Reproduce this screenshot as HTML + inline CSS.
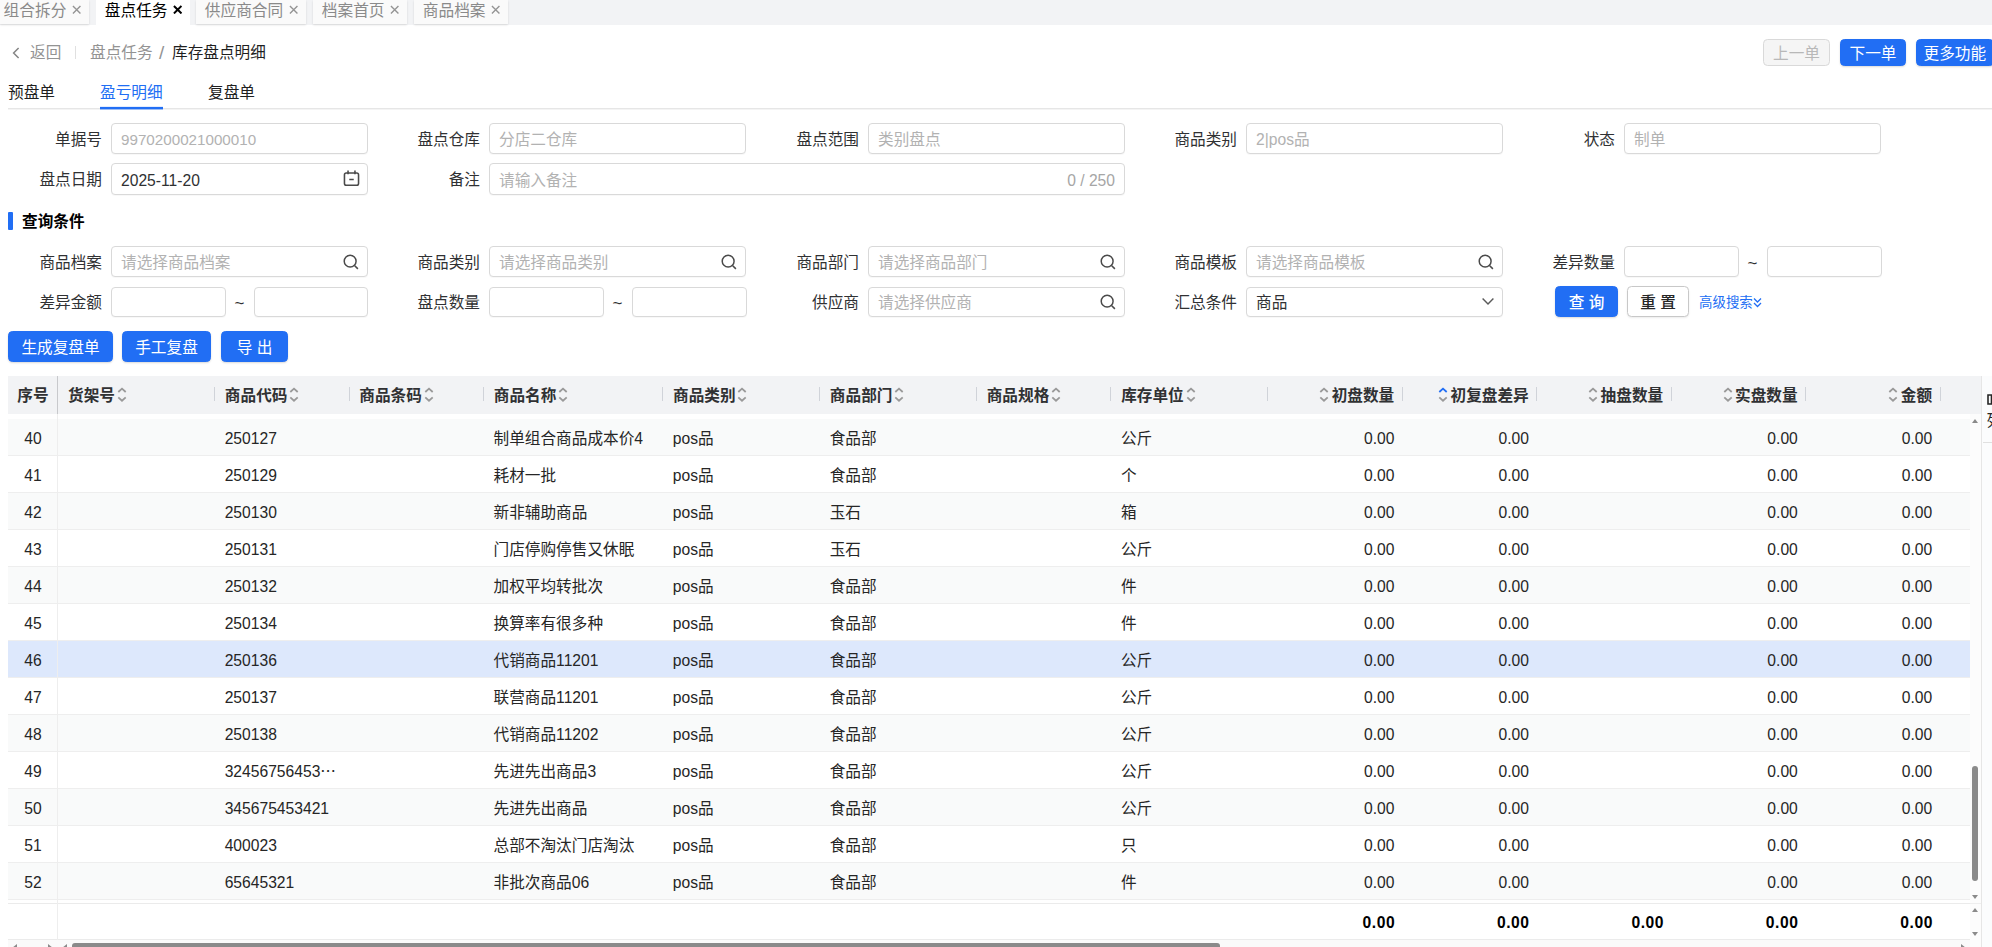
<!DOCTYPE html>
<html lang="zh-CN">
<head>
<meta charset="utf-8">
<title>库存盘点明细</title>
<style>
*{box-sizing:border-box;margin:0;padding:0}
html,body{width:1992px;height:947px;overflow:hidden;background:#fff}
body{font-family:"Liberation Sans","Noto Sans CJK SC",sans-serif;font-size:15.65px;color:#303133;position:relative;line-height:1}
.abs{position:absolute}
#tabbar{position:absolute;left:0;top:0;width:1992px;height:25px;background:#f2f3f5}
.tab{position:absolute;top:0;height:24px;background:#fafafa;color:#8a8a8a;font-size:15.7px;line-height:21.6px;white-space:nowrap;padding-left:4px;box-shadow:0 1px 2px rgba(0,0,0,.12)}
.tab.on{background:#fff;color:#000;height:25px;box-shadow:none}
.tab svg{position:absolute;right:7.3px;top:4.8px;width:9.4px;height:9.4px;fill:none;stroke:#949494;stroke-width:1.45}
.tab.on svg{stroke:#000;stroke-width:2.1;right:8px}
#crumb{position:absolute;left:0;top:40px;height:24px;line-height:26.8px;white-space:nowrap;font-size:15.65px}
#crumb span{position:absolute;top:0}
.g{color:#939393}
.btn{position:absolute;height:31px;line-height:32.2px;border-radius:4.5px;background:#216ef4;color:#fff;text-align:center;font-size:15.65px;white-space:nowrap;border:1px solid #216ef4;box-shadow:0 1px 2px rgba(0,0,0,.15)}
.btn.sm{height:27px;line-height:27.4px}
.btn.dis{background:#f5f5f5;border-color:#d9d9d9;color:#b8b8b8;box-shadow:none}
.btn.pl{background:#fff;border-color:#c8c8c8;color:#262626;box-shadow:0 1px 2px rgba(0,0,0,.08)}
.stab{position:absolute;top:80px;height:26px;line-height:26px;font-size:15.7px;color:#1f1f1f;white-space:nowrap}
.stab.on{color:#216ef4}
#sline{position:absolute;left:8px;top:108px;width:1984px;height:1px;background:#e6e6e6;box-shadow:0 1px 0 #f4f4f4}
#sink{position:absolute;left:100px;top:107px;width:63px;height:2px;background:#216ef4;box-shadow:0 1px 0 rgba(33,110,244,.4),0 -1px 0 rgba(33,110,244,.12)}
.lb{position:absolute;height:31px;line-height:33.4px;text-align:right;width:100px;color:#303133;white-space:nowrap}
.in{position:absolute;height:31px;width:257px;border:1px solid #d9d9d9;border-radius:4px;background:#fff;line-height:31.8px;padding-left:9px;color:#b2b2b2;white-space:nowrap;box-shadow:0 1px 1px rgba(0,0,0,.03)}
.in.v{color:#303133}
.in svg{position:absolute;right:7px;top:5.5px;width:18px;height:18px;fill:none;stroke:#4a4a4a;stroke-width:1.4}
.in .cnt{position:absolute;right:9px;top:0;color:#a6a6a6}
.til{position:absolute;top:286px;height:31px;line-height:36.4px;color:#303133;font-size:17px;margin-left:-.5px}
#qt{position:absolute;left:8px;top:212px;height:18px;line-height:19.6px;font-weight:bold;color:#000;padding-left:14px;font-size:15.65px}
#qt:before{content:"";position:absolute;left:0;top:0;width:4.5px;height:18px;border-radius:1px;background:#216ef4}
#thead{position:absolute;left:8px;top:376px;width:1973px;height:38px;background:#f2f3f5}
.th{position:absolute;top:376px;height:38px;line-height:39.2px;font-weight:bold;color:#303133;white-space:nowrap;font-size:15.65px}
.th.c0{text-align:center}
.th.r{text-align:right}
.srt{display:inline-block;width:10px;height:15.3px;vertical-align:-1.1px;fill:none;stroke:#999;stroke-width:1.8;margin:0 0 0 1.8px}
.th.r .srt{margin:0 2.4px 0 0}
.srt .on{stroke:#216ef4}
.sep{position:absolute;top:387px;width:1px;height:14px;background:#d0d3d9}
#tbody{position:absolute;left:8px;top:414px;width:1962px;height:489px;overflow:hidden}
.tr{position:absolute;left:0;width:1962px;height:37.08px;border-bottom:1px solid #eee;background:#fff;margin-top:-414px}
.tr.odd{background:#f9fafa}
.tr.sel{background:#dde8fc}
.td{position:absolute;top:0;height:37px;line-height:39px;white-space:nowrap;color:#262626}
.td.c{text-align:center}
.td.r{text-align:right}
#tfoot{position:absolute;left:8px;top:903px;width:1962px;height:37px;border-top:1px solid #ebebeb;border-bottom:1px solid #ebebeb;background:#fff;font-weight:bold;letter-spacing:.55px}
#tfoot .td{color:#000;line-height:37px}
#c0line{position:absolute;left:57px;top:376px;width:1px;height:571px;background:#eee}
#c0lineh{position:absolute;left:56.6px;top:376px;width:1px;height:38px;background:#c8c9cc}
#vsb{position:absolute;left:1970px;top:414px;width:11px;height:533px;background:#fcfcfc}
#vthumb{position:absolute;left:1972.3px;top:766.4px;width:6px;height:114.6px;border-radius:3px;background:#8a8a8a}
#side{position:absolute;left:1981px;top:376px;width:11px;height:571px;background:#fbfcfd;border-left:1px solid #e6e6e6;overflow:hidden}
#hsb{position:absolute;left:8px;top:940px;width:1962px;height:7px;background:#fafafa}
#hthumb{position:absolute;left:71.8px;top:942.7px;width:1148px;height:6px;border-radius:3px;background:#8a8a8a}
.ar{position:absolute;width:0;height:0;border:3px solid transparent}
.n{font-size:15.2px}
.in.r2{line-height:29.8px}
.in.r2 svg{top:4.5px}

</style>
</head>
<body>
<div id="tabbar">
<div class="tab" style="left:0px;width:89px;padding-left:3.6px">组合拆分<svg viewBox="0 0 10 10"><path d="M1 1l8 8M9 1l-8 8"/></svg></div>
<div class="tab on" style="left:96px;width:94px;padding-left:8.8px">盘点任务<svg viewBox="0 0 10 10"><path d="M1 1l8 8M9 1l-8 8"/></svg></div>
<div class="tab" style="left:196px;width:110px;padding-left:8.8px">供应商合同<svg viewBox="0 0 10 10"><path d="M1 1l8 8M9 1l-8 8"/></svg></div>
<div class="tab" style="left:313px;width:94px;padding-left:8.8px">档案首页<svg viewBox="0 0 10 10"><path d="M1 1l8 8M9 1l-8 8"/></svg></div>
<div class="tab" style="left:414px;width:94px;padding-left:8.8px">商品档案<svg viewBox="0 0 10 10"><path d="M1 1l8 8M9 1l-8 8"/></svg></div>
</div>
<div id="crumb">
<svg class="abs" style="left:12px;top:6.5px;width:8px;height:12px" viewBox="0 0 8 12"><path d="M6.6 1 1.6 6l5 5" fill="none" stroke="#858585" stroke-width="1.5"/></svg>
<span class="g" style="left:30px">返回</span>
<i class="abs" style="left:75px;top:6px;width:1px;height:13px;background:#e0e0e0"></i>
<span class="g" style="left:90px">盘点任务</span>
<span class="g" style="left:159px;font-size:19px">/</span>
<span style="left:172px;color:#1f1f1f">库存盘点明细</span>
</div>
<div class="btn sm dis" style="left:1763px;top:39px;width:67px">上一单</div>
<div class="btn sm" style="left:1840px;top:39px;width:66px">下一单</div>
<div class="btn sm" style="left:1916px;top:39px;width:77.6px">更多功能</div>

<div class="stab" style="left:8px">预盘单</div>
<div class="stab on" style="left:100px">盈亏明细</div>
<div class="stab" style="left:208px">复盘单</div>
<div id="sline"></div><div id="sink"></div>

<div class="lb" style="left:2px;top:123px">单据号</div><div class="in" style="left:111px;top:123px"><span class="n">9970200021000010</span></div>
<div class="lb" style="left:380px;top:123px">盘点仓库</div><div class="in" style="left:489px;top:123px">分店二仓库</div>
<div class="lb" style="left:759px;top:123px">盘点范围</div><div class="in" style="left:868px;top:123px">类别盘点</div>
<div class="lb" style="left:1137px;top:123px">商品类别</div><div class="in" style="left:1246px;top:123px">2|pos品</div>
<div class="lb" style="left:1515px;top:123px">状态</div><div class="in" style="left:1624px;top:123px">制单</div>

<div class="lb" style="left:2px;top:163px">盘点日期</div><div class="in v" style="left:111px;top:163px;height:32px;line-height:33.2px">2025-11-20<svg style="width:19px;height:19px;right:6.5px;top:5px" viewBox="0 0 17 17"><rect x="2.2" y="3.6" width="12.6" height="11" rx="1.6"/><path d="M5.4 1.4v3.2M11.6 1.4v3.2M6.5 9.4h4"/></svg></div>
<div class="lb" style="left:380px;top:163px">备注</div><div class="in" style="left:489px;top:163px;width:636px;height:32px;line-height:33.2px">请输入备注<span class="cnt">0 / 250</span></div>

<div id="qt">查询条件</div>

<div class="lb" style="left:2px;top:246px">商品档案</div><div class="in" style="left:111px;top:246px">请选择商品档案<svg viewBox="0 0 17 17"><circle cx="7.7" cy="7.7" r="5.6"/><path d="M11.8 11.8l3.2 3.2"/></svg></div>
<div class="lb" style="left:380px;top:246px">商品类别</div><div class="in" style="left:489px;top:246px">请选择商品类别<svg viewBox="0 0 17 17"><circle cx="7.7" cy="7.7" r="5.6"/><path d="M11.8 11.8l3.2 3.2"/></svg></div>
<div class="lb" style="left:759px;top:246px">商品部门</div><div class="in" style="left:868px;top:246px">请选择商品部门<svg viewBox="0 0 17 17"><circle cx="7.7" cy="7.7" r="5.6"/><path d="M11.8 11.8l3.2 3.2"/></svg></div>
<div class="lb" style="left:1137px;top:246px">商品模板</div><div class="in" style="left:1246px;top:246px">请选择商品模板<svg viewBox="0 0 17 17"><circle cx="7.7" cy="7.7" r="5.6"/><path d="M11.8 11.8l3.2 3.2"/></svg></div>
<div class="lb" style="left:1515px;top:246px">差异数量</div><div class="in" style="left:1624px;top:246px;width:115px"></div><span class="til" style="left:1748px;top:246px;line-height:36.4px">~</span><div class="in" style="left:1767px;top:246px;width:115px"></div>

<div class="lb" style="left:2px;top:286px">差异金额</div><div class="in" style="left:111px;top:287px;height:30px;width:115px"></div><span class="til" style="left:235px">~</span><div class="in" style="left:254px;top:287px;height:30px;width:114px"></div>
<div class="lb" style="left:380px;top:286px">盘点数量</div><div class="in" style="left:489px;top:287px;height:30px;width:115px"></div><span class="til" style="left:613px">~</span><div class="in" style="left:632px;top:287px;height:30px;width:115px"></div>
<div class="lb" style="left:759px;top:286px">供应商</div><div class="in r2" style="left:868px;top:287px;height:30px">请选择供应商<svg viewBox="0 0 17 17"><circle cx="7.7" cy="7.7" r="5.6"/><path d="M11.8 11.8l3.2 3.2"/></svg></div>
<div class="lb" style="left:1137px;top:286px">汇总条件</div><div class="in v r2" style="left:1246px;top:287px;height:30px">商品<svg viewBox="0 0 17 17" style="right:4.6px;top:4px;stroke:#5a5a5a"><path d="M3.4 6.2l5.1 5.1 5.1-5.1"/></svg></div>
<div class="btn" style="left:1555px;top:286px;width:63px;font-weight:500">查 询</div>
<div class="btn pl" style="left:1627px;top:286px;width:62px;font-weight:500">重 置</div>
<div class="abs" style="left:1699px;top:294px;font-size:13.45px;line-height:17.2px;color:#216ef4;white-space:nowrap">高级搜索<svg style="width:9px;height:11px;vertical-align:-1px;fill:none;stroke:#216ef4;stroke-width:1.3" viewBox="0 0 9 11"><path d="M1 1.5l3.5 3.5L8 1.5M1 6l3.5 3.5L8 6"/></svg></div>

<div class="btn" style="left:8px;top:331px;width:105px">生成复盘单</div>
<div class="btn" style="left:122px;top:331px;width:89px">手工复盘</div>
<div class="btn" style="left:221px;top:331px;width:67px">导 出</div>

<div id="thead"></div>
<div class="th c0" style="left:8px;width:50px">序号</div><div class="th" style="left:68.00px">货架号<svg class="srt" viewBox="0 0 10 15.3"><path d="M1.3 5 5 1.6 8.7 5M1.3 10.3 5 13.7 8.7 10.3"/></svg></div><div class="th" style="left:224.86px">商品代码<svg class="srt" viewBox="0 0 10 15.3"><path d="M1.3 5 5 1.6 8.7 5M1.3 10.3 5 13.7 8.7 10.3"/></svg></div><div class="th" style="left:359.30px">商品条码<svg class="srt" viewBox="0 0 10 15.3"><path d="M1.3 5 5 1.6 8.7 5M1.3 10.3 5 13.7 8.7 10.3"/></svg></div><div class="th" style="left:493.75px">商品名称<svg class="srt" viewBox="0 0 10 15.3"><path d="M1.3 5 5 1.6 8.7 5M1.3 10.3 5 13.7 8.7 10.3"/></svg></div><div class="th" style="left:673.02px">商品类别<svg class="srt" viewBox="0 0 10 15.3"><path d="M1.3 5 5 1.6 8.7 5M1.3 10.3 5 13.7 8.7 10.3"/></svg></div><div class="th" style="left:829.87px">商品部门<svg class="srt" viewBox="0 0 10 15.3"><path d="M1.3 5 5 1.6 8.7 5M1.3 10.3 5 13.7 8.7 10.3"/></svg></div><div class="th" style="left:986.73px">商品规格<svg class="srt" viewBox="0 0 10 15.3"><path d="M1.3 5 5 1.6 8.7 5M1.3 10.3 5 13.7 8.7 10.3"/></svg></div><div class="th" style="left:1121.18px">库存单位<svg class="srt" viewBox="0 0 10 15.3"><path d="M1.3 5 5 1.6 8.7 5M1.3 10.3 5 13.7 8.7 10.3"/></svg></div><div class="th r" style="left:1267.53px;width:126.75px"><svg class="srt" viewBox="0 0 10 15.3"><path d="M1.3 5 5 1.6 8.7 5M1.3 10.3 5 13.7 8.7 10.3"/></svg>初盘数量</div><div class="th r" style="left:1401.98px;width:126.75px"><svg class="srt" viewBox="0 0 10 15.3"><path d="M1.3 10.3 5 13.7 8.7 10.3"/><path class="on" d="M1.3 5 5 1.6 8.7 5"/></svg>初复盘差异</div><div class="th r" style="left:1536.43px;width:126.75px"><svg class="srt" viewBox="0 0 10 15.3"><path d="M1.3 5 5 1.6 8.7 5M1.3 10.3 5 13.7 8.7 10.3"/></svg>抽盘数量</div><div class="th r" style="left:1670.88px;width:126.75px"><svg class="srt" viewBox="0 0 10 15.3"><path d="M1.3 5 5 1.6 8.7 5M1.3 10.3 5 13.7 8.7 10.3"/></svg>实盘数量</div><div class="th r" style="left:1805.32px;width:126.75px"><svg class="srt" viewBox="0 0 10 15.3"><path d="M1.3 5 5 1.6 8.7 5M1.3 10.3 5 13.7 8.7 10.3"/></svg>金额</div><i class="sep" style="left:214.16px"></i><i class="sep" style="left:348.60px"></i><i class="sep" style="left:483.05px"></i><i class="sep" style="left:662.32px"></i><i class="sep" style="left:819.17px"></i><i class="sep" style="left:976.03px"></i><i class="sep" style="left:1110.48px"></i><i class="sep" style="left:1267.33px"></i><i class="sep" style="left:1401.78px"></i><i class="sep" style="left:1536.23px"></i><i class="sep" style="left:1670.68px"></i><i class="sep" style="left:1805.12px"></i><i class="sep" style="left:1939.57px"></i>
<div id="tbody">
<div class="tr odd" style="top:418.52px"><span class="td c" style="left:0;width:50px">40</span><span class="td" style="left:216.66px">250127</span><span class="td" style="left:485.55px">制单组合商品成本价4</span><span class="td" style="left:664.82px">pos品</span><span class="td" style="left:821.67px">食品部</span><span class="td" style="left:1112.98px">公斤</span><span class="td r" style="left:1259.53px;width:126.95px">0.00</span><span class="td r" style="left:1393.98px;width:126.95px">0.00</span><span class="td r" style="left:1662.88px;width:126.95px">0.00</span><span class="td r" style="left:1797.32px;width:126.95px">0.00</span></div>
<div class="tr" style="top:455.57px"><span class="td c" style="left:0;width:50px">41</span><span class="td" style="left:216.66px">250129</span><span class="td" style="left:485.55px">耗材一批</span><span class="td" style="left:664.82px">pos品</span><span class="td" style="left:821.67px">食品部</span><span class="td" style="left:1112.98px">个</span><span class="td r" style="left:1259.53px;width:126.95px">0.00</span><span class="td r" style="left:1393.98px;width:126.95px">0.00</span><span class="td r" style="left:1662.88px;width:126.95px">0.00</span><span class="td r" style="left:1797.32px;width:126.95px">0.00</span></div>
<div class="tr odd" style="top:492.62px"><span class="td c" style="left:0;width:50px">42</span><span class="td" style="left:216.66px">250130</span><span class="td" style="left:485.55px">新非辅助商品</span><span class="td" style="left:664.82px">pos品</span><span class="td" style="left:821.67px">玉石</span><span class="td" style="left:1112.98px">箱</span><span class="td r" style="left:1259.53px;width:126.95px">0.00</span><span class="td r" style="left:1393.98px;width:126.95px">0.00</span><span class="td r" style="left:1662.88px;width:126.95px">0.00</span><span class="td r" style="left:1797.32px;width:126.95px">0.00</span></div>
<div class="tr" style="top:529.67px"><span class="td c" style="left:0;width:50px">43</span><span class="td" style="left:216.66px">250131</span><span class="td" style="left:485.55px">门店停购停售又休眠</span><span class="td" style="left:664.82px">pos品</span><span class="td" style="left:821.67px">玉石</span><span class="td" style="left:1112.98px">公斤</span><span class="td r" style="left:1259.53px;width:126.95px">0.00</span><span class="td r" style="left:1393.98px;width:126.95px">0.00</span><span class="td r" style="left:1662.88px;width:126.95px">0.00</span><span class="td r" style="left:1797.32px;width:126.95px">0.00</span></div>
<div class="tr odd" style="top:566.72px"><span class="td c" style="left:0;width:50px">44</span><span class="td" style="left:216.66px">250132</span><span class="td" style="left:485.55px">加权平均转批次</span><span class="td" style="left:664.82px">pos品</span><span class="td" style="left:821.67px">食品部</span><span class="td" style="left:1112.98px">件</span><span class="td r" style="left:1259.53px;width:126.95px">0.00</span><span class="td r" style="left:1393.98px;width:126.95px">0.00</span><span class="td r" style="left:1662.88px;width:126.95px">0.00</span><span class="td r" style="left:1797.32px;width:126.95px">0.00</span></div>
<div class="tr" style="top:603.77px"><span class="td c" style="left:0;width:50px">45</span><span class="td" style="left:216.66px">250134</span><span class="td" style="left:485.55px">换算率有很多种</span><span class="td" style="left:664.82px">pos品</span><span class="td" style="left:821.67px">食品部</span><span class="td" style="left:1112.98px">件</span><span class="td r" style="left:1259.53px;width:126.95px">0.00</span><span class="td r" style="left:1393.98px;width:126.95px">0.00</span><span class="td r" style="left:1662.88px;width:126.95px">0.00</span><span class="td r" style="left:1797.32px;width:126.95px">0.00</span></div>
<div class="tr odd sel" style="top:640.82px"><span class="td c" style="left:0;width:50px">46</span><span class="td" style="left:216.66px">250136</span><span class="td" style="left:485.55px">代销商品11201</span><span class="td" style="left:664.82px">pos品</span><span class="td" style="left:821.67px">食品部</span><span class="td" style="left:1112.98px">公斤</span><span class="td r" style="left:1259.53px;width:126.95px">0.00</span><span class="td r" style="left:1393.98px;width:126.95px">0.00</span><span class="td r" style="left:1662.88px;width:126.95px">0.00</span><span class="td r" style="left:1797.32px;width:126.95px">0.00</span></div>
<div class="tr" style="top:677.87px"><span class="td c" style="left:0;width:50px">47</span><span class="td" style="left:216.66px">250137</span><span class="td" style="left:485.55px">联营商品11201</span><span class="td" style="left:664.82px">pos品</span><span class="td" style="left:821.67px">食品部</span><span class="td" style="left:1112.98px">公斤</span><span class="td r" style="left:1259.53px;width:126.95px">0.00</span><span class="td r" style="left:1393.98px;width:126.95px">0.00</span><span class="td r" style="left:1662.88px;width:126.95px">0.00</span><span class="td r" style="left:1797.32px;width:126.95px">0.00</span></div>
<div class="tr odd" style="top:714.92px"><span class="td c" style="left:0;width:50px">48</span><span class="td" style="left:216.66px">250138</span><span class="td" style="left:485.55px">代销商品11202</span><span class="td" style="left:664.82px">pos品</span><span class="td" style="left:821.67px">食品部</span><span class="td" style="left:1112.98px">公斤</span><span class="td r" style="left:1259.53px;width:126.95px">0.00</span><span class="td r" style="left:1393.98px;width:126.95px">0.00</span><span class="td r" style="left:1662.88px;width:126.95px">0.00</span><span class="td r" style="left:1797.32px;width:126.95px">0.00</span></div>
<div class="tr" style="top:751.97px"><span class="td c" style="left:0;width:50px">49</span><span class="td" style="left:216.66px">32456756453⋯</span><span class="td" style="left:485.55px">先进先出商品3</span><span class="td" style="left:664.82px">pos品</span><span class="td" style="left:821.67px">食品部</span><span class="td" style="left:1112.98px">公斤</span><span class="td r" style="left:1259.53px;width:126.95px">0.00</span><span class="td r" style="left:1393.98px;width:126.95px">0.00</span><span class="td r" style="left:1662.88px;width:126.95px">0.00</span><span class="td r" style="left:1797.32px;width:126.95px">0.00</span></div>
<div class="tr odd" style="top:789.02px"><span class="td c" style="left:0;width:50px">50</span><span class="td" style="left:216.66px">345675453421</span><span class="td" style="left:485.55px">先进先出商品</span><span class="td" style="left:664.82px">pos品</span><span class="td" style="left:821.67px">食品部</span><span class="td" style="left:1112.98px">公斤</span><span class="td r" style="left:1259.53px;width:126.95px">0.00</span><span class="td r" style="left:1393.98px;width:126.95px">0.00</span><span class="td r" style="left:1662.88px;width:126.95px">0.00</span><span class="td r" style="left:1797.32px;width:126.95px">0.00</span></div>
<div class="tr" style="top:826.07px"><span class="td c" style="left:0;width:50px">51</span><span class="td" style="left:216.66px">400023</span><span class="td" style="left:485.55px">总部不淘汰门店淘汰</span><span class="td" style="left:664.82px">pos品</span><span class="td" style="left:821.67px">食品部</span><span class="td" style="left:1112.98px">只</span><span class="td r" style="left:1259.53px;width:126.95px">0.00</span><span class="td r" style="left:1393.98px;width:126.95px">0.00</span><span class="td r" style="left:1662.88px;width:126.95px">0.00</span><span class="td r" style="left:1797.32px;width:126.95px">0.00</span></div>
<div class="tr odd" style="top:863.12px"><span class="td c" style="left:0;width:50px">52</span><span class="td" style="left:216.66px">65645321</span><span class="td" style="left:485.55px">非批次商品06</span><span class="td" style="left:664.82px">pos品</span><span class="td" style="left:821.67px">食品部</span><span class="td" style="left:1112.98px">件</span><span class="td r" style="left:1259.53px;width:126.95px">0.00</span><span class="td r" style="left:1393.98px;width:126.95px">0.00</span><span class="td r" style="left:1662.88px;width:126.95px">0.00</span><span class="td r" style="left:1797.32px;width:126.95px">0.00</span></div>
</div>
<div id="tfoot"><span class="td r" style="left:1259.53px;width:127.65px">0.00</span><span class="td r" style="left:1393.98px;width:127.65px">0.00</span><span class="td r" style="left:1528.43px;width:127.65px">0.00</span><span class="td r" style="left:1662.88px;width:127.65px">0.00</span><span class="td r" style="left:1797.32px;width:127.65px">0.00</span></div>
<div id="c0line"></div><div id="c0lineh"></div>
<div id="vsb"></div><i class="abs" style="left:1970px;top:903px;width:11px;height:1px;background:#eee"></i><div id="vthumb"></div>
<i class="ar" style="left:1972.3px;top:418.8px;border-bottom:4.5px solid #8a8a8a;border-top:0"></i>
<i class="ar" style="left:1972.3px;top:894.5px;border-top:4.5px solid #8a8a8a;border-bottom:0"></i>
<i class="ar" style="left:1972.3px;top:908.3px;border-bottom:4.5px solid #8a8a8a;border-top:0"></i>
<i class="ar" style="left:1972.3px;top:931.8px;border-top:4.5px solid #8a8a8a;border-bottom:0"></i>
<div id="side"><svg class="abs" style="left:5px;top:18px;width:12px;height:11px" viewBox="0 0 12 11"><path d="M1 1h10v9H1zM4.5 1v9M8 1v9" fill="none" stroke="#262626" stroke-width="1.6"/></svg><span class="abs" style="left:4.5px;top:34.8px;font-size:15.65px;line-height:19px;color:#262626;width:16px">列</span><i class="abs" style="left:1px;top:66px;width:12px;height:1px;background:#e0e0e0"></i></div>
<div id="hsb"></div><div id="hthumb"></div>
<i class="ar" style="left:11.5px;top:943.6px;border-width:4px 5.5px 4px 0;border-right-color:#8a8a8a"></i>
<i class="ar" style="left:47.8px;top:943.6px;border-width:4px 0 4px 5.5px;border-left-color:#8a8a8a"></i>
<i class="ar" style="left:62px;top:943.6px;border-width:4px 5.5px 4px 0;border-right-color:#8a8a8a"></i>
<i class="ar" style="left:1960.8px;top:943.6px;border-width:4px 0 4px 5.5px;border-left-color:#8a8a8a"></i>
</body>
</html>
